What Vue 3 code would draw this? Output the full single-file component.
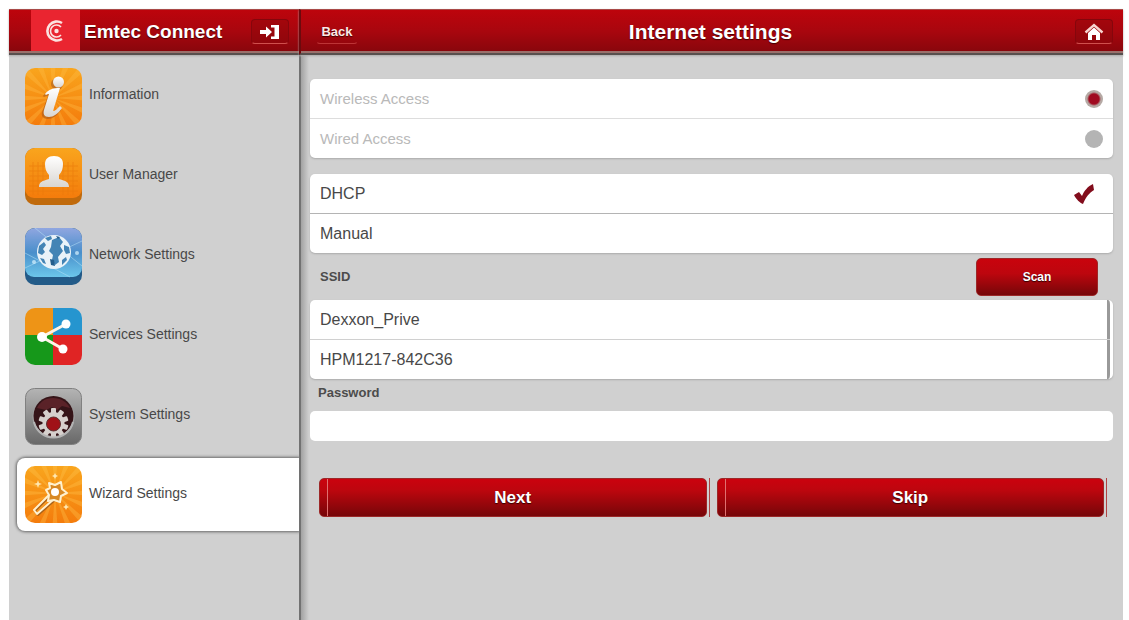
<script setup>
import { ref } from 'vue';

const menu = [
  { id: 'info', label: 'Information' },
  { id: 'user', label: 'User Manager' },
  { id: 'network', label: 'Network Settings' },
  { id: 'services', label: 'Services Settings' },
  { id: 'system', label: 'System Settings' },
  { id: 'wizard', label: 'Wizard Settings' },
];
const networks = ['Dexxon_Prive', 'HPM1217-842C36'];

const current = ref('wizard');
const access = ref('wireless');
const mode = ref('dhcp');
const ssid = ref('');
const password = ref('');

const rays = Array.from({ length: 16 }, (_, i) => i * 22.5);
const teeth = Array.from({ length: 10 }, (_, i) => i * 36);
</script>

<template>
  <div class="app">
    <aside class="sidebar">
      <header class="bar brand-bar">
        <span class="logo">
          <svg width="26" height="26" viewBox="0 0 26 26" fill="none" stroke="#fbe3e0">
            <path d="M19 5A9.5 9.5 0 1 0 19 21" stroke-width="2.6" />
            <path d="M18 9A6 6 0 1 0 18 17" stroke-width="1.6" />
            <circle cx="13.5" cy="13" r="2.2" fill="#fbe3e0" stroke="none" />
          </svg>
        </span>
        <h1 class="brand">Emtec Connect</h1>
        <button class="bar-btn logout" aria-label="Log out">
          <svg width="22" height="16" viewBox="0 0 22 16">
            <path d="M1 6h6V2.5L13 8l-6 5.5V10H1z" fill="#fff" />
            <path d="M12 1h8v14h-8v-2.5h3.5v-9H12z" fill="#fff" />
          </svg>
        </button>
      </header>
      <nav class="menu">
        <a
          v-for="item in menu"
          :key="item.id"
          href="#"
          class="menu-item"
          :class="{ active: current === item.id }"
          @click.prevent="current = item.id"
        >
          <svg class="menu-icon" viewBox="0 0 57 57">
            <defs>
              <linearGradient id="orange" x1="0" y1="0" x2="0" y2="1">
                <stop offset="0" stop-color="#f9a51d" />
                <stop offset="1" stop-color="#f47c0c" />
              </linearGradient>
              <linearGradient id="blue" x1="0" y1="0" x2="0" y2="1">
                <stop offset="0" stop-color="#90a6e0" />
                <stop offset="0.5" stop-color="#4a8fcb" />
                <stop offset="1" stop-color="#6cc6ea" />
              </linearGradient>
              <linearGradient id="steel" x1="0" y1="0" x2="0" y2="1">
                <stop offset="0" stop-color="#b4b4b4" />
                <stop offset="1" stop-color="#686868" />
              </linearGradient>
              <linearGradient id="silver" x1="0" y1="0" x2="0" y2="1">
                <stop offset="0" stop-color="#fff" />
                <stop offset="1" stop-color="#d9d6d2" />
              </linearGradient>
              <clipPath id="tile"><rect width="57" height="57" rx="10" /></clipPath>
            </defs>

            <g v-if="item.id === 'info'" clip-path="url(#tile)">
              <rect width="57" height="57" fill="url(#orange)" />
              <path
                v-for="r in rays"
                :key="r"
                d="M28 30L24 -20H32Z"
                fill="#ffbd48"
                opacity="0.35"
                :transform="`rotate(${r} 28 30)`"
              />
              <g fill="#a8581c" opacity="0.6" transform="translate(-1 1)">
                <circle cx="33" cy="15" r="6" />
                <path d="M19 27c4-5 8-6 16-6l-8 23c3 0 5-2 8-5l2 2c-4 6-9 9-13 9-5 0-7-3-6-7l6-16c-2 0-3 0-4 1z" />
              </g>
              <g fill="url(#silver)">
                <circle cx="33.5" cy="14" r="5.5" />
                <path d="M20 26c4-5 8-6 15-6l-7 23c2 0 4-2 7-5l2 2c-4 6-9 9-13 9-5 0-6-3-5-7l5-16c-1 0-2 0-3 1z" />
              </g>
            </g>

            <g v-else-if="item.id === 'user'" clip-path="url(#tile)">
              <rect width="57" height="57" fill="#c06a0c" />
              <rect width="57" height="50" rx="9" fill="url(#orange)" />
              <g stroke="#e9790a" stroke-width="1" opacity="0.6">
                <path d="M4 18H53M4 23H53M4 28H53M4 33H53M4 38H53M4 43H53" />
                <path d="M8 14V47M13 14V47M18 14V47M38 14V47M43 14V47M48 14V47" />
              </g>
              <path
                d="M14 39c0-5 3-6 10-8v-4c-3-3-4-7-4-11 0-5 3-8 9-8s9 3 9 8c0 4-1 8-4 11v4c7 2 10 3 10 8z"
                fill="url(#silver)"
              />
            </g>

            <g v-else-if="item.id === 'network'" clip-path="url(#tile)">
              <rect width="57" height="57" fill="#235b88" />
              <rect width="57" height="49" rx="9" fill="url(#blue)" />
              <path d="M0 40L57 13M0 25L45 49M10 0L57 38" stroke="#b7e3f7" opacity="0.5" />
              <circle cx="29" cy="24" r="17" fill="#e9f2f8" />
              <path
                d="M14 18l5-4 2 3-3 4 2 3-3 3-4-2zM20 10l6-2 1 3-4 2zM27 12l7-3 4 5-3 4 3 5-5 6 1 5-4 3-3-5 1-5-4-4 2-4zM39 17l5 2 1 6-4 1-2-4zM15 30l4 1 2 5-3-1zM37 32l4-3 1 3-5 5z"
                fill="#4384b5"
              />
              <path d="M25 31l4 1 1 6-4-1zM31 8l4 1-2 2z" fill="#245e8c" />
              <circle cx="9" cy="34" r="2" fill="#d8f2ff" opacity="0.7" />
              <circle cx="52" cy="25" r="2" fill="#d8f2ff" opacity="0.7" />
            </g>

            <g v-else-if="item.id === 'services'" clip-path="url(#tile)">
              <rect width="29" height="27" fill="#ee9416" />
              <rect x="28" width="29" height="27" fill="#2595cf" />
              <rect y="27" width="29" height="30" fill="#16981a" />
              <rect x="28" y="27" width="29" height="30" fill="#e02424" />
              <path d="M41 16L17 29L38 41" fill="none" stroke="#fff4e6" stroke-width="3" />
              <circle cx="41" cy="16" r="4.5" fill="#fff" />
              <circle cx="17" cy="29" r="5" fill="#fff" />
              <circle cx="38" cy="41" r="4.5" fill="#fff" />
            </g>

            <g v-else-if="item.id === 'system'">
              <rect x="0.5" y="0.5" width="56" height="56" rx="9" fill="url(#steel)" stroke="#808080" />
              <circle cx="28.5" cy="29" r="21" fill="#a5a5a5" />
              <circle cx="28.5" cy="28" r="20" fill="#351418" />
              <path d="M12 20c3-6 8-10 16-10s14 4 17 10l-8-2-5 4-5-3-6 3z" fill="#5a2228" />
              <g fill="#d6d0cd">
                <rect
                  v-for="t in teeth"
                  :key="t"
                  x="26"
                  y="20"
                  width="5"
                  height="8"
                  rx="1"
                  :transform="`rotate(${t} 28.5 35)`"
                />
                <circle cx="28.5" cy="35" r="11" />
              </g>
              <circle cx="28.5" cy="36" r="7" fill="#a01218" stroke="#5d3030" />
              <path d="M9 34a20 20 0 0 0 39 0" fill="none" stroke="#b4b4b4" stroke-width="2" />
            </g>

            <g v-else clip-path="url(#tile)">
              <rect width="57" height="57" fill="url(#orange)" />
              <path
                v-for="r in rays"
                :key="r"
                d="M30 27L26 -25H34Z"
                fill="#ffc24c"
                opacity="0.35"
                :transform="`rotate(${r} 30 27)`"
              />
              <g fill="none" stroke="#fff1cf" stroke-width="2" stroke-linejoin="round">
                <path d="M24 29L9 44l3 4 17-15z" stroke="#a96218" transform="translate(1 1)" />
                <path d="M24 29L9 44l3 4 17-15z" />
                <path d="M24 17l6 2 6-3 1 7 5 4-6 3-1 6-6-2-6 1 1-6-3-5 4-2z" fill="#d88925" />
              </g>
              <circle cx="30" cy="26" r="4" fill="#fff" />
              <path
                d="M13 14l1 3 3 1-3 1-1 3-1-3-3-1 3-1zM30 7l1 2 2 1-2 1-1 2-1-2-2-1 2-1zM41 38l1 2 2 1-2 1-1 2-1-2-2-1 2-1z"
                fill="#ffe7b0"
              />
            </g>
          </svg>
          <span class="menu-label">{{ item.label }}</span>
        </a>
      </nav>
    </aside>

    <main class="main">
      <header class="bar main-bar">
        <button class="back">Back</button>
        <h2 class="title">Internet settings</h2>
        <button class="bar-btn home" aria-label="Home">
          <svg width="20" height="18" viewBox="0 0 20 18">
            <path d="M1.5 9.5L10 2l8.5 7.5" fill="none" stroke="#f7d5d0" stroke-width="2.4" />
            <path d="M4 10l6-5.5L16 10v7h-4v-5H8v5H4z" fill="#fff" />
          </svg>
        </button>
      </header>

      <form class="content" @submit.prevent>
        <div class="group disabled">
          <label class="row">
            Wireless Access
            <input v-model="access" class="dot" type="radio" name="access" value="wireless" disabled />
          </label>
          <label class="row">
            Wired Access
            <input v-model="access" class="dot" type="radio" name="access" value="wired" disabled />
          </label>
        </div>

        <div class="group">
          <label class="row mode-row">
            DHCP
            <input v-model="mode" class="plain" type="radio" name="mode" value="dhcp" />
            <svg v-if="mode === 'dhcp'" class="check" viewBox="0 0 20 20">
              <path d="M0 11l5-3 3 4c2-5 6-10 11-12l1 6c-5 3-8 7-11 14-3-1-7-5-9-9z" fill="#820d1c" />
            </svg>
          </label>
          <label class="row mode-row">
            Manual
            <input v-model="mode" class="plain" type="radio" name="mode" value="manual" />
            <svg v-if="mode === 'manual'" class="check" viewBox="0 0 20 20">
              <path d="M0 11l5-3 3 4c2-5 6-10 11-12l1 6c-5 3-8 7-11 14-3-1-7-5-9-9z" fill="#820d1c" />
            </svg>
          </label>
        </div>

        <div class="scan-row">
          <span class="caption">SSID</span>
          <button type="button" class="red-btn scan">Scan</button>
        </div>

        <div class="group networks">
          <button v-for="name in networks" :key="name" type="button" class="row" @click="ssid = name">
            {{ name }}
          </button>
        </div>

        <label class="caption password-label" for="password">Password</label>
        <input id="password" v-model="password" class="password" type="password" />

        <div class="actions">
          <div class="action"><button type="button" class="red-btn wide">Next</button></div>
          <div class="action"><button type="button" class="red-btn wide">Skip</button></div>
        </div>
      </form>
    </main>
  </div>
</template>

<style>
body {
  margin: 0;
  background: #fff;
}
</style>

<style scoped>
.app {
  box-sizing: border-box;
  display: flex;
  min-height: 100vh;
  padding: 9px 6px 0 9px;
  font-family: 'Liberation Sans', Arial, sans-serif;
  color: #444;
}
.app * {
  box-sizing: border-box;
}
button {
  font-family: inherit;
  cursor: pointer;
}
.sidebar {
  width: 290px;
  flex: none;
  background: #d0d0d0;
}
.main {
  flex: 1;
  min-width: 0;
  background: linear-gradient(to right, #727272 2px, #a2a2a2 2px, #d0d0d0 10px);
}
.bar {
  display: flex;
  align-items: center;
  height: 46px;
  background: linear-gradient(#bd040c, #a8060e 50%, #86060c);
  border-top: 1px solid #a94a48;
  border-bottom: 2px solid #58504e;
  box-shadow: inset 0 -2px #9b716c, 0 1px 2px #aaa;
  color: #fff;
  text-shadow: 0 1px 1px #400;
}
.brand-bar {
  padding: 0 10px 0 22px;
}
.main-bar {
  border-left: 2px solid #6c0a0e;
}
.logo {
  display: flex;
  align-items: center;
  justify-content: center;
  align-self: stretch;
  width: 49px;
  margin-bottom: 2px;
  background: #ea2530;
}
.brand {
  flex: 1;
  margin: 0 0 0 4px;
  font-size: 19px;
  line-height: 24px;
}
.bar-btn {
  display: flex;
  align-items: center;
  justify-content: center;
  width: 38px;
  height: 25px;
  padding: 0;
  background: linear-gradient(#a3060c, #90060c);
  border: 1px solid #85060c;
  border-bottom-color: #d0504e;
  border-radius: 4px;
}
.back {
  width: 42px;
  height: 25px;
  margin-left: 15px;
  padding: 0;
  background: none;
  border: 1px solid transparent;
  border-bottom-color: #bd3436;
  border-radius: 4px;
  color: #fbe8e6;
  font-size: 13px;
  font-weight: bold;
  text-shadow: 0 1px 1px #400;
}
.title {
  flex: 1;
  margin: 0;
  padding-right: 12px;
  font-size: 21px;
  line-height: 24px;
  text-align: center;
}
.home {
  margin-right: 10px;
}
.menu {
  padding: 1px 0 0 8px;
}
.menu-item {
  display: flex;
  align-items: center;
  height: 80px;
  padding-left: 8px;
  color: #484848;
  font-size: 14px;
  line-height: 20px;
  text-decoration: none;
}
.menu-item.active {
  height: 73px;
  margin-top: 2px;
  background: #fff;
  border-radius: 8px 0 0 8px;
  box-shadow: 0 0 3px 1px #666;
  clip-path: inset(-6px 0 -6px -6px);
}
.menu-icon {
  width: 57px;
  height: 57px;
  margin-right: 7px;
}
.menu-label {
  padding-bottom: 4px;
}
.content {
  padding: 24px 10px 0 11px;
}
.group {
  margin-bottom: 16px;
  background: #fff;
  border-radius: 5px;
  box-shadow: 0 1px 2px #aaa;
  overflow: hidden;
}
.row {
  display: flex;
  align-items: center;
  justify-content: space-between;
  width: 100%;
  height: 39px;
  padding: 0 10px;
  background: none;
  border: 0;
  font-size: 16px;
  line-height: 20px;
  color: #484848;
}
.row + .row {
  height: 40px;
  border-top: 1px solid #b4b4b4;
}
.disabled .row {
  color: #b9b9b9;
  font-size: 15px;
}
.disabled .row + .row {
  border-top-color: #ddd;
}
.dot {
  appearance: none;
  width: 18px;
  height: 18px;
  margin: 0;
  border-radius: 50%;
  background: #b4b4b4;
}
.dot:checked {
  background: radial-gradient(circle, #a00a20 0 5px, #b5a9a4 7px);
}
.mode-row {
  position: relative;
}
.plain {
  position: absolute;
  inset: 0;
  appearance: none;
  margin: 0;
  cursor: pointer;
}
.check {
  width: 20px;
  height: 20px;
  margin-right: 9px;
}
.scan-row {
  display: flex;
  align-items: center;
  justify-content: space-between;
  height: 47px;
  margin-top: -16px;
  padding: 0 15px 0 10px;
}
.caption {
  font-size: 13px;
  font-weight: bold;
  line-height: 16px;
  color: #4c4c4c;
}
.red-btn {
  padding: 0;
  background: linear-gradient(#c9030d, #bd060e 40%, #760609);
  border: 1px solid #9c2828;
  border-radius: 5px;
  color: #fff;
  font-weight: bold;
  text-shadow: 0 1px 1px #300;
}
.scan {
  width: 122px;
  height: 38px;
  font-size: 12px;
}
.networks {
  margin-bottom: 6px;
  border-right: 3px solid #fff;
  background: linear-gradient(#999, #999) right / 3px 100% no-repeat #fff;
}
.networks .row + .row {
  border-top-color: #d0d0d0;
}
.password-label {
  display: block;
  padding-left: 8px;
}
.password {
  display: block;
  width: 100%;
  height: 30px;
  margin-top: 10px;
  padding: 0 10px;
  background: #fff;
  border: 0;
  border-radius: 5px;
  font-size: 16px;
}
.actions {
  display: flex;
  gap: 7px;
  padding: 37px 6px 0 9px;
}
.action {
  flex: 1;
  padding-right: 2px;
  border-right: 1px solid #b04444;
}
.wide {
  display: block;
  width: 100%;
  height: 39px;
  background:
    linear-gradient(#e07070, #e07070) 7px 0 / 1px 100% no-repeat,
    linear-gradient(#cb020e, #bd060e 30%, #760609);
  font-size: 17px;
}
</style>
